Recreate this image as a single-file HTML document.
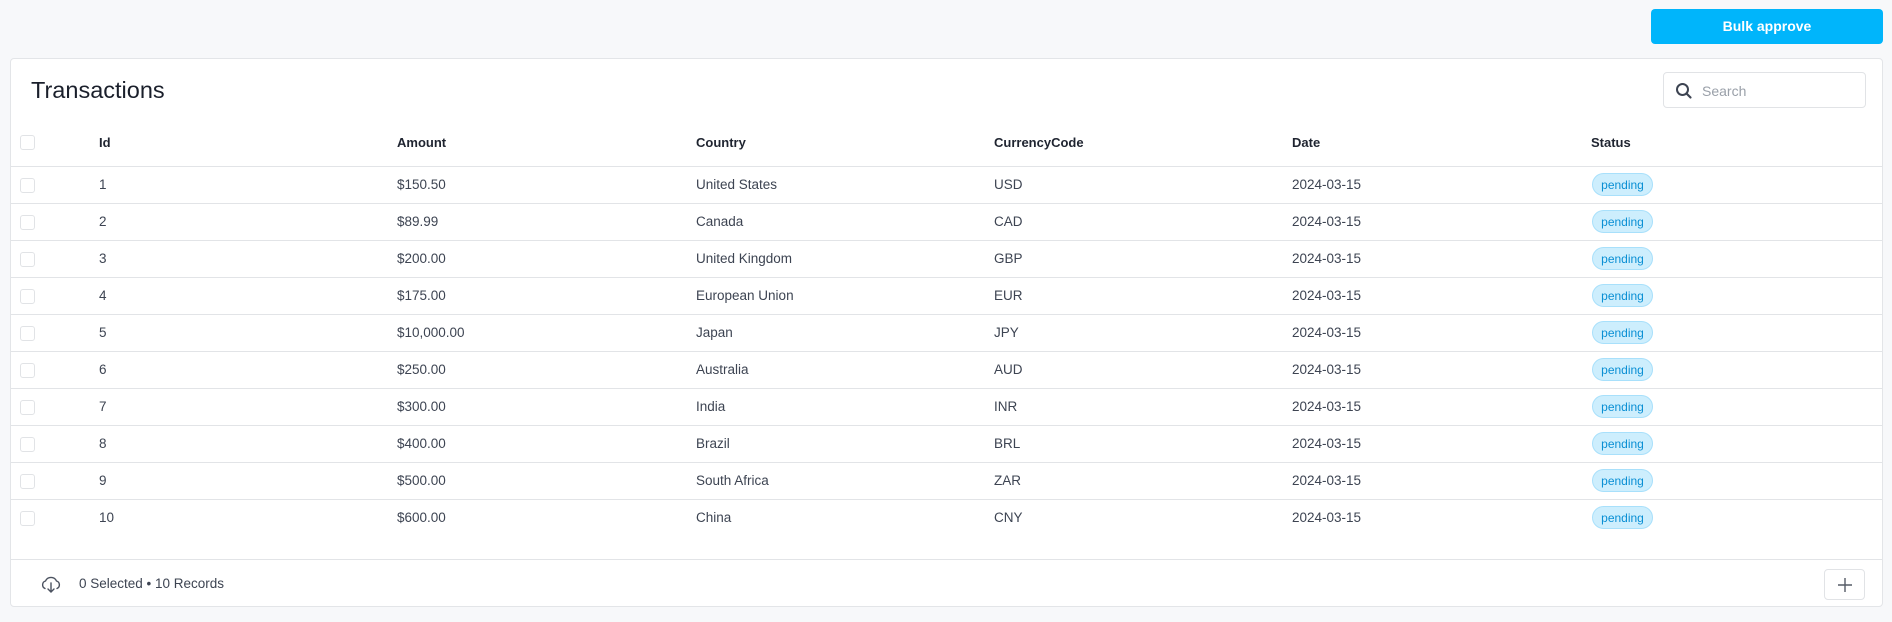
<!DOCTYPE html>
<html><head><meta charset="utf-8"><style>
*{box-sizing:border-box;margin:0;padding:0}
body{width:1892px;height:622px;background:#f7f8fa;font-family:"Liberation Sans",sans-serif;position:relative;overflow:hidden;color:#374151}
.btn{position:absolute;left:1651px;top:9px;width:232px;height:35px;background:#00b5fb;border-radius:4px;color:#fff;font-size:14px;font-weight:bold;text-align:center;line-height:35px}
.card{position:absolute;left:10px;top:58px;width:1873px;height:549px;background:#fff;border:1px solid #e3e5e8;border-radius:4px}
.title{position:absolute;left:20px;top:18px;font-size:23.5px;color:#1a1f2b}
.search{position:absolute;left:1652px;top:13px;width:203px;height:36px;border:1px solid #e1e3e6;border-radius:4px}
.search span{position:absolute;left:38px;top:10px;font-size:14px;color:#9aa0a9}
.row{position:absolute;left:0;width:1871px;height:37px;border-bottom:1px solid #e2e4e7;font-size:13.5px;color:#3d4452}
.row div{position:absolute;top:10px}
.hdr{font-weight:bold;color:#1f2430;font-size:13px}
.cb{position:absolute;left:9px;top:11px!important;width:15px;height:15px;border:1px solid #e1e3e6;border-radius:3px}
.badge{top:6px!important;height:23px;width:61px;border:1px solid #a8e0fb;background:#cdeefd;color:#0a8fd4;border-radius:12px;font-size:12px;text-align:center;line-height:22px}
.foot{position:absolute;left:0;top:500px;width:1871px;border-top:1px solid #e2e4e7;height:48px}
.plus{position:absolute;left:1813px;top:9px;width:41px;height:31px;border:1px solid #e1e3e6;border-radius:4px}
</style></head><body>
<div class="btn">Bulk approve</div>
<div class="card">
<div class="title">Transactions</div>
<div class="search"><svg style="position:absolute;left:11px;top:9px" width="18" height="18" viewBox="0 0 18 18"><circle cx="7.5" cy="7.5" r="5.5" fill="none" stroke="#3d4452" stroke-width="2"/><path d="M11.5 11.5L15.5 15.5" stroke="#3d4452" stroke-width="2.2" stroke-linecap="round"/></svg><span>Search</span></div>
<div class="row hdr" style="top:70px;height:38px"><div class="cb" style="top:6px!important"></div><div style="left:88px;top:6px">Id</div><div style="left:386px;top:6px">Amount</div><div style="left:685px;top:6px">Country</div><div style="left:983px;top:6px">CurrencyCode</div><div style="left:1281px;top:6px">Date</div><div style="left:1580px;top:6px">Status</div></div>
<div id="rows"></div>
<div class="foot">
<svg style="position:absolute;left:29px;top:15px" width="22" height="18" viewBox="0 0 22 18"><path d="M5 13.5A4 4 0 0 1 5.5 6 A6 6 0 0 1 16.5 6 A4 4 0 0 1 17 13.5" fill="none" stroke="#4b5260" stroke-width="1.4" stroke-linecap="round"/><path d="M11 8v9M8 14l3 3 3-3" fill="none" stroke="#4b5260" stroke-width="1.4" stroke-linecap="round"/></svg>
<div style="position:absolute;left:68px;top:16px;font-size:13.5px;color:#3d4452">0 Selected • 10 Records</div>
<div class="plus"><svg style="position:absolute;left:12px;top:7px" width="16" height="16" viewBox="0 0 16 16"><path d="M8 1v14M1 8h14" stroke="#555b66" stroke-width="1.4"/></svg></div>
</div>
</div>
<script>
var d=[["1","$150.50","United States","USD"],["2","$89.99","Canada","CAD"],["3","$200.00","United Kingdom","GBP"],["4","$175.00","European Union","EUR"],["5","$10,000.00","Japan","JPY"],["6","$250.00","Australia","AUD"],["7","$300.00","India","INR"],["8","$400.00","Brazil","BRL"],["9","$500.00","South Africa","ZAR"],["10","$600.00","China","CNY"]];
var h="";d.forEach(function(r,i){h+='<div class="row" style="top:'+(108+i*37)+'px;'+(i==9?'border-bottom:none':'')+'"><div class="cb"></div><div style="left:88px">'+r[0]+'</div><div style="left:386px">'+r[1]+'</div><div style="left:685px">'+r[2]+'</div><div style="left:983px">'+r[3]+'</div><div style="left:1281px">2024-03-15</div><div class="badge" style="left:1581px">pending</div></div>';});
document.getElementById("rows").outerHTML=h;
</script>
</body></html>
